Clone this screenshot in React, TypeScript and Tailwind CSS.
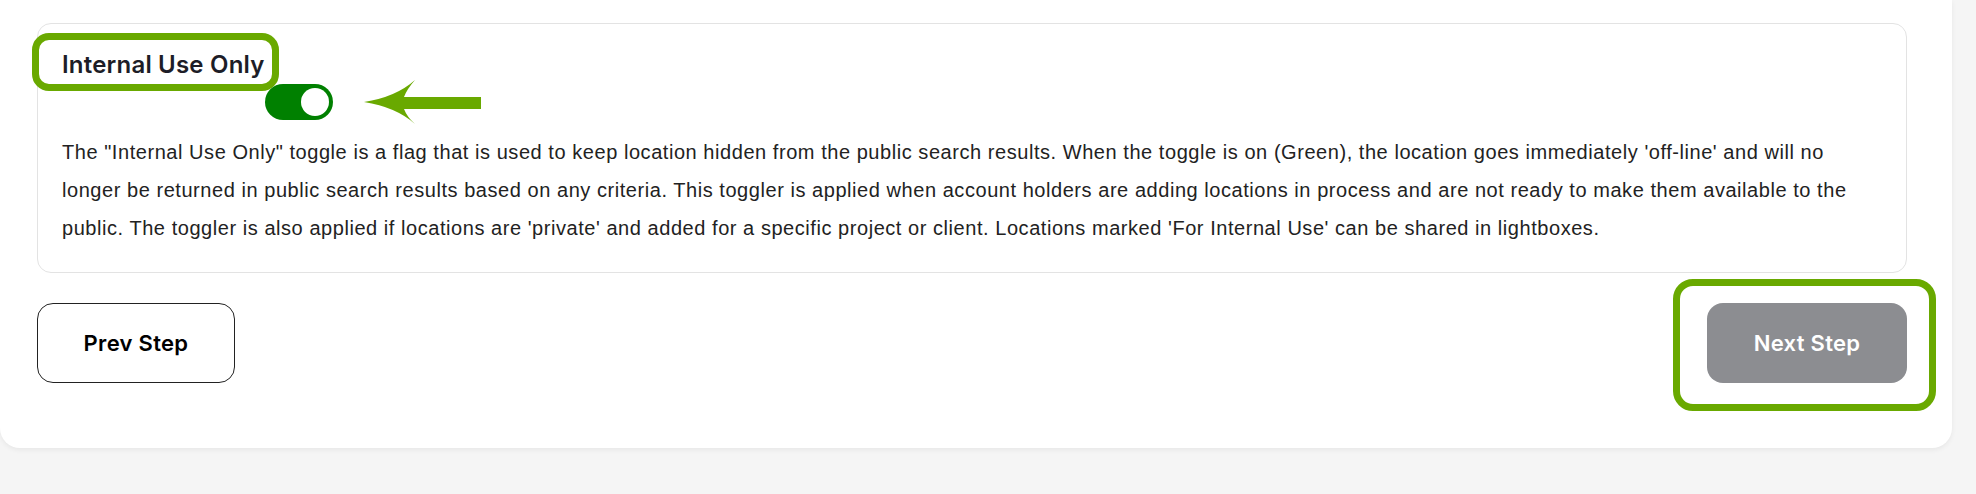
import React from "react";

export default function App() {
  return (
    <div className="min-h-screen w-full bg-[#f5f5f5]" style={{ fontFamily: "'Liberation Sans', Arial, sans-serif" }}>
      <div className="w-[1952px] rounded-b-[20px] bg-white pl-[37px] pr-[45px] pt-[23px] pb-[65px] shadow-[0_2px_5px_rgba(0,0,0,0.06)]">
        <div className="relative rounded-[14px] border border-[#e3e3e3] px-[24px] pt-[24px] pb-[25px]">
          {/* annotation box around title */}
          <div className="pointer-events-none absolute left-[-6px] top-[9px] h-[58px] w-[247px] rounded-[17px] border-[7px] border-[#69a900]" />
          <div className="flex items-start">
            <h3 className="font-['Inter',sans-serif] text-[24px] font-semibold leading-[33px] tracking-[0.2px] text-[#1d1d27]">Internal Use Only</h3>
            <button className="relative mt-[36px] flex h-[36px] w-[68px] shrink-0 items-center rounded-full bg-[#008000] p-[4px]">
              <span className="ml-auto h-[28px] w-[28px] rounded-full bg-white" />
            </button>
          </div>
          {/* annotation arrow */}
          <svg className="pointer-events-none absolute left-[323px] top-[53px]" width="124" height="50" viewBox="0 0 124 50">
            <path d="M3 25 Q35 20 54 3 Q46 12 43 20 L120 20 L120 32 L43 32 Q46 40 54 47 Q35 30 3 25 Z" fill="#69a900" />
          </svg>
          <p className="mt-[13px] text-[20px] leading-[38px] tracking-[0.55px] text-[#222222]">
            The "Internal Use Only" toggle is a flag that is used to keep location hidden from the public search results. When the toggle is on (Green), the location goes immediately 'off-line' and will no longer be returned in public search results based on any criteria. This toggler is applied when account holders are adding locations in process and are not ready to make them available to the public. The toggler is also applied if locations are 'private' and added for a specific project or client. Locations marked 'For Internal Use' can be shared in lightboxes.
          </p>
        </div>
        <div className="mt-[30px] flex items-center justify-between">
          <button className="h-[80px] w-[198px] rounded-[16px] border border-[#222222] bg-white font-['Inter',sans-serif] text-[22px] font-semibold tracking-[0.3px] text-black">
            Prev Step
          </button>
          <div className="relative">
            <div className="pointer-events-none absolute left-[-34px] top-[-24px] h-[132px] w-[263px] rounded-[20px] border-[7px] border-[#69a900]" />
            <button className="relative h-[80px] w-[200px] rounded-[16px] bg-[#8c8d91] font-['Inter',sans-serif] text-[22px] font-semibold tracking-[0.3px] text-white">
              Next Step
            </button>
          </div>
        </div>
      </div>
    </div>
  );
}
